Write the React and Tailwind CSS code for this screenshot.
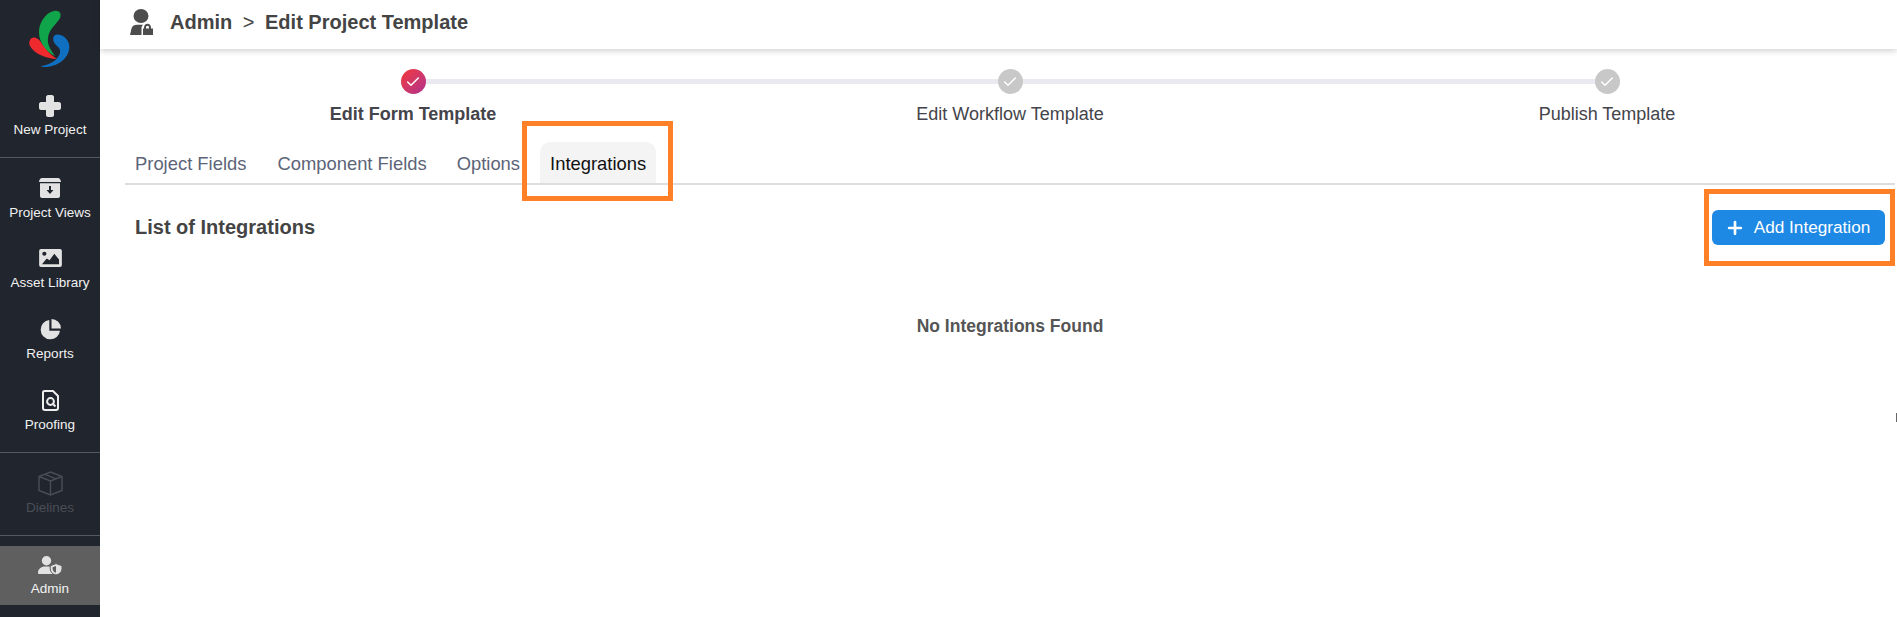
import { Check, Plus } from "lucide-react";

const Logo = () => (
    <svg width="44" height="60" viewBox="0 0 44 60">
        <path d="M26 1 C31 0 34 3 32 8 C28 15 21 19 20 28 C19 35 23 40 27 46 C18 42 11 33 11 22 C11 13 17 3 26 1 Z" fill="#10a54a" />
        <path d="M2 30 C4 26 9 27 12 31 C16 37 20 43 29 49 C20 49 6 44 2 36 C1 34 1 32 2 30 Z" fill="#ee2a2e" />
        <path d="M27 25 C32 23 39 27 41 34 C43 44 35 55 19 57 C15 57 13 57 13 56 C22 55 30 50 32 43 C33 39 30 37 28 35 C25 32 24 27 27 25 Z" fill="#0f6fc0" />
    </svg>
);

const NewProjectIcon = () => (
    <svg width="22" height="22" viewBox="0 0 22 22" fill="#e2e2e2">
        <path d="M9 0 H13 C14 0 15 1 15 2 V7 H20 C21 7 22 8 22 9 V13 C22 14 21 15 20 15 H15 V20 C15 21 14 22 13 22 H9 C8 22 7 21 7 20 V15 H2 C1 15 0 14 0 13 V9 C0 8 1 7 2 7 H7 V2 C7 1 8 0 9 0 Z" />
    </svg>
);

const ProjectViewsIcon = () => (
    <svg width="22" height="20" viewBox="0 0 22 20" fill="#e2e2e2">
        <path d="M3 0 H19 C20.5 0 22 2 22 4 H0 C0 2 1.5 0 3 0 Z" />
        <path d="M1 5.2 H21 V18 C21 19 20 20 19 20 H3 C2 20 1 19 1 18 Z" />
        <path d="M10 8 H12 V12 H14.5 L11 16 L7.5 12 H10 Z" fill="#21252e" />
    </svg>
);

const AssetIcon = () => (
    <svg width="23" height="18" viewBox="0 0 24 19">
        <rect width="24" height="19" rx="2" fill="#e2e2e2" />
        <circle cx="5.5" cy="5" r="2.2" fill="#21252e" />
        <path d="M3 16 L8 10 L11 12 L16 5 L21 11 V16 Z" fill="#21252e" />
    </svg>
);

const ReportsIcon = () => (
    <svg width="21" height="21" viewBox="0 0 21 21" fill="#e2e2e2">
        <path d="M9.3 1 V11.7 H20 A9.7 9.7 0 1 1 9.3 1 Z" />
        <path d="M11.5 0 A9.5 9.5 0 0 1 21 9.5 H11.5 Z" />
    </svg>
);

const ProofingIcon = () => (
    <svg width="17" height="21" viewBox="0 0 17 21" fill="none" stroke="#eeeeee" strokeWidth="2">
        <path d="M2.5 1 H11 L16 6 V18 C16 19 15 20 14 20 H3 C2 20 1 19 1 18 V2.5 C1 1.5 1.5 1 2.5 1 Z" />
        <circle cx="8.5" cy="11.5" r="3.4" />
        <path d="M11 14 L13.5 16.5" />
    </svg>
);

const BoxIcon = () => (
    <svg width="25" height="25" viewBox="0 0 25 25" fill="none" stroke="#4a4e56" strokeWidth="1.4">
        <path d="M12.5 1 L24 5.5 V19.5 L12.5 24 L1 19.5 V5.5 Z" />
        <path d="M1 5.5 L12.5 10 L24 5.5 M12.5 10 V24 M6.5 3.2 L18 7.8" />
    </svg>
);

const AdminIcon = () => (
    <svg width="24" height="19" viewBox="0 0 24 19" fill="#e2e2e2">
        <circle cx="8.5" cy="4.7" r="4.7" />
        <path d="M0 17 C0 13 3 10.5 7 10.5 H11 C12 10.5 13 10.7 14 11.2 V14 C14 15.5 14.5 17 15.5 18 H1 C0.5 18 0 17.5 0 17 Z" />
        <path d="M18 7.6 L24 9.8 V12.8 C24 15.8 21.5 18.3 18 19 C14.5 18.3 12.2 15.8 12.2 12.8 V9.8 Z" stroke="#5f5f5f" strokeWidth="1" />
        <path d="M18 10 V16.8 C16 16.2 14.6 14.6 14.6 12.8 V11.3 Z" fill="#5f5f5f" />
    </svg>
);

const UserLockIcon = () => (
    <svg width="23" height="26" viewBox="0 0 23 28" preserveAspectRatio="none" fill="#4d4d4d">
        <circle cx="11" cy="7.5" r="7.5" />
        <path d="M0 28 L1.5 21 C2 18.5 4 17 7 17 H13 C12 18 11.5 19 11.5 20 V28 Z" />
        <path d="M14 21 V20 C14 17.5 15.5 16 17.5 16 C19.5 16 21 17.5 21 20 V21 H23 V28 H13 V21 Z M16 21 H19 V20 C19 19 18.5 18 17.5 18 C16.5 18 16 19 16 20 Z" fillRule="evenodd" />
    </svg>
);

const navItems = [
    { label: "Project Views", icon: <ProjectViewsIcon />, spacing: "pt-[18px]" },
    { label: "Asset Library", icon: <AssetIcon />, spacing: "pt-[25px]" },
    { label: "Reports", icon: <ReportsIcon />, spacing: "pt-[26px]" },
    { label: "Proofing", icon: <ProofingIcon />, spacing: "pt-[26px]" },
];

const NavItem = ({ label, icon, spacing, muted, labelGap = "mt-[5px]" }) => (
    <div className={`flex flex-col items-center ${spacing}`}>
        <div className="h-6 flex items-center justify-center">{icon}</div>
        <span className={`${labelGap} text-[13.5px] leading-4 ${muted ? "text-[#4a4e56]" : "text-[#f2f2f2]"}`}>{label}</span>
    </div>
);

const Sidebar = () => (
    <aside className="w-[100px] h-full shrink-0 flex flex-col bg-[#21252e]">
        <div className="h-[94px] pt-[10px] flex justify-center">
            <Logo />
        </div>
        <div className="h-[64px] border-b border-[#555960]">
            <NavItem label="New Project" icon={<NewProjectIcon />} spacing="" labelGap="mt-1" />
        </div>
        <div className="h-[295px] border-b border-[#555960]">
            {navItems.map((item) => (
                <NavItem key={item.label} {...item} />
            ))}
        </div>
        <div className="h-[83px] border-b border-[#555960]">
            <NavItem label="Dielines" icon={<BoxIcon />} spacing="pt-[18px]" muted />
        </div>
        <div className="mt-[10px] h-[59px] bg-[#5f5f5f]">
            <NavItem label="Admin" icon={<AdminIcon />} spacing="pt-[7px]" labelGap="mt-1" />
        </div>
    </aside>
);

const steps = [
    { label: "Edit Form Template", active: true },
    { label: "Edit Workflow Template" },
    { label: "Publish Template" },
];

const Stepper = () => (
    <div className="relative flex justify-between pl-[213px] pr-[190px] pt-[20px]">
        <div className="absolute left-[313px] right-[291px] top-[30px] h-[5px] bg-[#e9e9ef]" />
        {steps.map((step) => (
            <div key={step.label} className="relative w-[200px] flex flex-col items-center">
                <div
                    className={`w-[25px] h-[25px] rounded-full flex items-center justify-center ${
                        step.active ? "bg-gradient-to-br from-[#f4352f] to-[#b02f8a]" : "bg-[#c8c8c8]"
                    }`}
                >
                    <Check size={16} color="#fff" strokeWidth={2.2} />
                </div>
                <span className={`mt-[10px] text-[18px] leading-5 text-[#44444a] ${step.active ? "font-bold" : ""}`}>
                    {step.label}
                </span>
            </div>
        ))}
    </div>
);

export default function App() {
    return (
        <div className="relative w-[1897px] h-[617px] flex bg-white overflow-hidden font-['Liberation_Sans',sans-serif]">
            <Sidebar />
            <main className="flex-1 flex flex-col">
                <header className="h-[49px] flex items-center pl-[30px] pb-[5px] gap-[17px] shadow-[0_2px_6px_rgba(0,0,0,0.18)]">
                    <UserLockIcon />
                    <h1 className="text-[20px] font-bold text-[#444444]">
                        Admin <span className="font-normal mx-[5px]">&gt;</span> Edit Project Template
                    </h1>
                </header>

                <Stepper />

                <div className="mt-[18px] ml-[25px] mr-[2px] h-[43px] flex items-end border-b-2 border-[#dddddd] text-[18.4px] leading-[43px]">
                    <span className="ml-[10px] h-[41px] text-[#5c6478]">Project Fields</span>
                    <span className="ml-[31px] h-[41px] text-[#5c6478]">Component Fields</span>
                    <span className="ml-[30px] h-[41px] text-[#5c6478]">Options</span>
                    <span className="ml-[20px] px-[10px] h-[41px] rounded-t-[10px] bg-[#f4f4f4] text-[#111111]">Integrations</span>
                </div>

                <div className="ml-[35px] mr-[12px] mt-[25px] flex items-center justify-between">
                    <h2 className="text-[20px] font-bold text-[#444444] -translate-y-px">List of Integrations</h2>
                    <button className="w-[173px] h-[35px] pr-[2px] rounded-[6px] bg-[#1e88e5] text-white text-[17.2px] flex items-center justify-center gap-[9px]">
                        <Plus size={20} strokeWidth={3.2} />
                        Add Integration
                    </button>
                </div>

                <p className="mt-[71px] pl-[23px] text-center text-[17.5px] leading-5 font-bold text-[#555555]">No Integrations Found</p>
            </main>

            {/* annotation boxes */}
            <div className="absolute left-[522px] top-[121px] w-[151px] h-[80px] border-[5px] border-[#ff8026]" />
            <div className="absolute left-[1704px] top-[189px] w-[191px] h-[77px] border-[5px] border-[#ff8026]" />
            <div className="absolute right-0 top-[413px] w-[1px] h-[9px] bg-[#666666]" />
        </div>
    );
}
